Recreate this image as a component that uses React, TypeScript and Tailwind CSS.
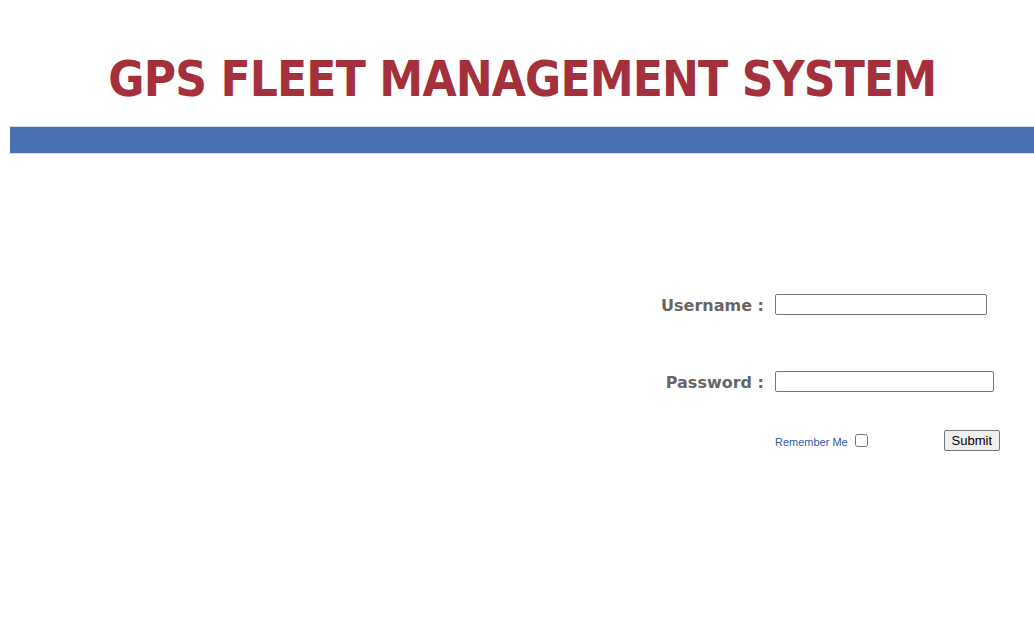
import React from 'react';

const App: React.FC = () => {
  return (
    <div className="w-[1034px] h-[640px] bg-white overflow-hidden font-['Liberation_Sans',Arial,sans-serif]">
      {/* Header banner */}
      <header className="pt-[52px]">
        <h1 className="text-center text-[#a3303a] text-[50px] leading-[54px] font-bold tracking-[-1px] font-['DejaVu_Sans',Verdana,sans-serif] scale-x-[0.883] pl-[12px]">
          GPS FLEET MANAGEMENT SYSTEM
        </h1>
        <div className="ml-[10px] mt-[20px] h-[28px] border-t border-b border-[#c9d8ee] bg-[#4870b3]" />
      </header>

      {/* Login form */}
      <form className="mt-[138px] ml-[640px] grid grid-cols-[124px_auto] gap-x-[11px] items-center" onSubmit={(e) => e.preventDefault()}>
        <label className="translate-y-[2px] text-right text-[16px] font-bold text-[#666666] font-['DejaVu_Sans',Verdana,sans-serif]">Username :</label>
        <input type="text" className="w-[212px] h-[21px] border border-[#767676] rounded-[2px] px-1 text-[13px]" />

        <label className="mt-[53px] translate-y-[2px] text-right text-[16px] font-bold text-[#666666] font-['DejaVu_Sans',Verdana,sans-serif]">Password :</label>
        <input type="password" className="mt-[53px] w-[219px] h-[21px] border border-[#767676] rounded-[2px] px-1 text-[13px]" />

        <div />
        <div className="mt-[37px] flex items-center w-[225px]">
          <span className="text-[11px] text-[#3355aa] mt-[4px]">Remember Me</span>
          <input type="checkbox" className="ml-[7px] w-[13px] h-[13px]" />
          <button type="submit" className="ml-auto h-[21px] px-[7px] text-[13px] text-black bg-[#efefef] border border-[#767676] rounded-[2px]">
            Submit
          </button>
        </div>
      </form>
    </div>
  );
};

export default App;
